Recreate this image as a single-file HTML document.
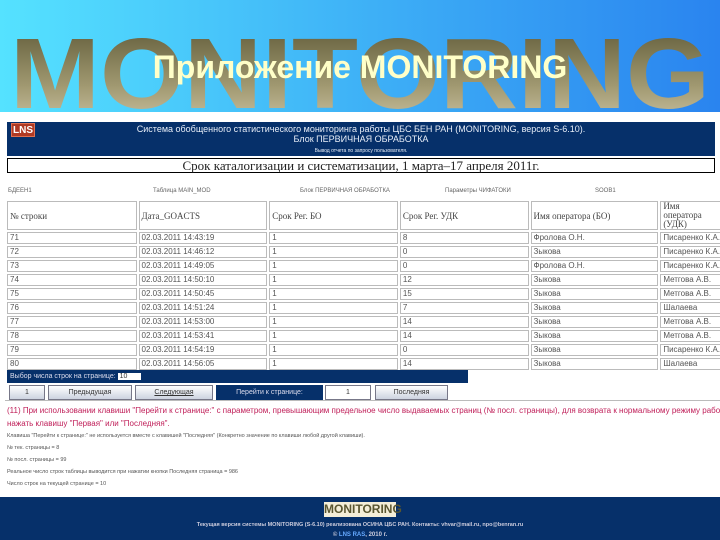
<!DOCTYPE html>
<html><head><meta charset="utf-8"><style>
*{margin:0;padding:0;box-sizing:border-box}
body{width:720px;height:540px;overflow:hidden;background:#fff;font-family:"Liberation Sans",sans-serif;position:relative}
.abs{position:absolute}
#hdr{left:0;top:0;width:720px;height:112px;background:linear-gradient(90deg,#55e2ff,#3aa8f5 60%,#2a84ef)}
#title{left:0;top:49px;width:720px;text-align:center;font:bold 32px "Liberation Sans",sans-serif;color:#ffffc8}
#ban{left:7px;top:122px;width:708px;height:34px;background:#06306a;color:#e8eef8;text-align:center;font-size:9px;line-height:10px;padding-top:2px}
#lns{left:11px;top:123px;width:24px;height:14px;background:#b03a24;color:#fff;font:bold 10px/14px "Liberation Sans",sans-serif;text-align:center;border:1px solid #e07050}
#box{left:7px;top:158px;width:708px;height:15px;border:1px solid #000;text-align:center;font:13px/13px "Liberation Serif",serif;color:#222}
.meta{top:188px;font-size:6px;color:#666}
table{position:absolute;left:5px;top:199px;border-collapse:separate;border-spacing:2px;width:720px}
td{border:1px solid #bbb;font-size:8px;color:#555;height:12px;padding:0 2px;white-space:nowrap;line-height:10px}
tr.h td{height:26px;font-size:9px;color:#444;font-family:"Liberation Serif",serif}
#bar{left:7px;top:370px;width:461px;height:13px;background:#06306a;color:#dde;font-size:7px;line-height:13px;padding-left:3px}
.btn{position:absolute;top:385px;height:15px;border:1px solid #778;background:linear-gradient(#fff,#cdd3e0);font-size:7px;line-height:13px;text-align:center;color:#333}
.n{position:absolute;left:7px;font-size:5.5px;color:#555}
#foot{left:0;top:497px;width:720px;height:43px;background:#06306a;color:#ccd;font-size:5.5px;text-align:center}
</style></head><body>
<div class="abs" id="hdr"></div>
<svg class="abs" style="left:0;top:0" width="720" height="112"><defs><linearGradient id="g" x1="0" y1="0" x2="0" y2="1"><stop offset="0" stop-color="#5a5634"/><stop offset="0.6" stop-color="#a09870"/><stop offset="1" stop-color="#d0c8a8"/></linearGradient></defs><text x="10" y="108" font-family="Liberation Sans" font-weight="bold" font-size="100" fill="url(#g)" textLength="700" lengthAdjust="spacingAndGlyphs">MONITORING</text></svg>
<div class="abs" id="title">Приложение MONITORING</div>
<div class="abs" id="ban">Система обобщенного статистического мониторинга работы ЦБС БЕН РАН (MONITORING, версия S-6.10).<br>Блок ПЕРВИЧНАЯ ОБРАБОТКА<br><span style="font-size:5px">Вывод отчета по запросу пользователя.</span></div>
<div class="abs" id="lns">LNS</div>
<div class="abs" id="box">Срок каталогизации и систематизации, 1 марта–17 апреля 2011г.</div>
<div class="abs meta" style="left:8px">БДЕЕН1</div>
<div class="abs meta" style="left:153px">Таблица MAIN_MOD</div>
<div class="abs meta" style="left:300px">Блок ПЕРВИЧНАЯ ОБРАБОТКА</div>
<div class="abs meta" style="left:445px">Параметры ЧИФАТОКИ</div>
<div class="abs meta" style="left:595px">SOOB1</div>
<table>
<tr class="h"><td style="width:130px">№ строки</td><td style="width:129px">Дата_GOACTS</td><td style="width:129px">Срок Рег. БО</td><td style="width:129px">Срок Рег. УДК</td><td style="width:128px">Имя оператора (БО)</td><td style="white-space:normal;line-height:9px">Имя оператора (УДК)</td></tr>
<tr><td>71</td><td>02.03.2011 14:43:19</td><td>1</td><td>8</td><td>Фролова О.Н.</td><td>Писаренко К.А.</td></tr>
<tr><td>72</td><td>02.03.2011 14:46:12</td><td>1</td><td>0</td><td>Зыкова</td><td>Писаренко К.А.</td></tr>
<tr><td>73</td><td>02.03.2011 14:49:05</td><td>1</td><td>0</td><td>Фролова О.Н.</td><td>Писаренко К.А.</td></tr>
<tr><td>74</td><td>02.03.2011 14:50:10</td><td>1</td><td>12</td><td>Зыкова</td><td>Метгова А.В.</td></tr>
<tr><td>75</td><td>02.03.2011 14:50:45</td><td>1</td><td>15</td><td>Зыкова</td><td>Метгова А.В.</td></tr>
<tr><td>76</td><td>02.03.2011 14:51:24</td><td>1</td><td>7</td><td>Зыкова</td><td>Шалаева</td></tr>
<tr><td>77</td><td>02.03.2011 14:53:00</td><td>1</td><td>14</td><td>Зыкова</td><td>Метгова А.В.</td></tr>
<tr><td>78</td><td>02.03.2011 14:53:41</td><td>1</td><td>14</td><td>Зыкова</td><td>Метгова А.В.</td></tr>
<tr><td>79</td><td>02.03.2011 14:54:19</td><td>1</td><td>0</td><td>Зыкова</td><td>Писаренко К.А.</td></tr>
<tr><td>80</td><td>02.03.2011 14:56:05</td><td>1</td><td>14</td><td>Зыкова</td><td>Шалаева</td></tr>
</table>
<div class="abs" id="bar">Выбор числа строк на странице: <span style="background:#fff;color:#333;padding:0 14px 0 2px">10</span></div>
<div class="btn" style="left:9px;width:36px">1</div>
<div class="btn" style="left:48px;width:84px">Предыдущая</div>
<div class="btn" style="left:135px;width:78px;text-decoration:underline">Следующая</div>
<div class="btn" style="left:216px;width:107px;background:#06306a;color:#dde;border-color:#06306a">Перейти к странице:</div>
<div class="btn" style="left:325px;width:46px;background:#fff">1</div>
<div class="btn" style="left:375px;width:73px">Последняя</div>
<div class="abs" style="left:5px;top:400px;width:715px;border-top:1px solid #bbb"></div>
<div class="n" style="top:406px;font-size:8px;color:#c0205a;white-space:nowrap">(11) При использовании клавиши "Перейти к странице:" с параметром, превышающим предельное число выдаваемых страниц (№ посл. страницы), для возврата к нормальному режиму работы требу</div>
<div class="n" style="top:419px;font-size:8px;color:#c0205a">нажать клавишу "Первая" или "Последняя".</div>
<div class="n" style="top:433px">Клавиша "Перейти к странице:" не используется вместе с клавишей "Последняя" (Конкретно значение по клавиши любой другой клавиши).</div>
<div class="n" style="top:445px">№ тек. страницы = 8</div>
<div class="n" style="top:457px">№ посл. страницы = 99</div>
<div class="n" style="top:469px">Реальное число строк таблицы выводится при нажатии кнопки Последняя страница = 986</div>
<div class="n" style="top:481px">Число строк на текущей странице = 10</div>
<div class="abs" id="foot">
<div style="margin:5px auto 0;width:72px;height:15px;background:#f4eed8;color:#5a5630;font:bold 12px/15px 'Liberation Sans',sans-serif">MONITORING</div>
<div style="margin-top:5px;font-weight:bold">Текущая версия системы MONITORING (S-6.10) реализована ОСИНА ЦБС РАН. Контакты: vhvar@mail.ru, npo@benran.ru</div>
<div style="margin-top:4px;font-size:6px;font-weight:bold">© <span style="color:#6af">LNS RAS</span>, 2010 г.</div>
</div>
</body></html>
